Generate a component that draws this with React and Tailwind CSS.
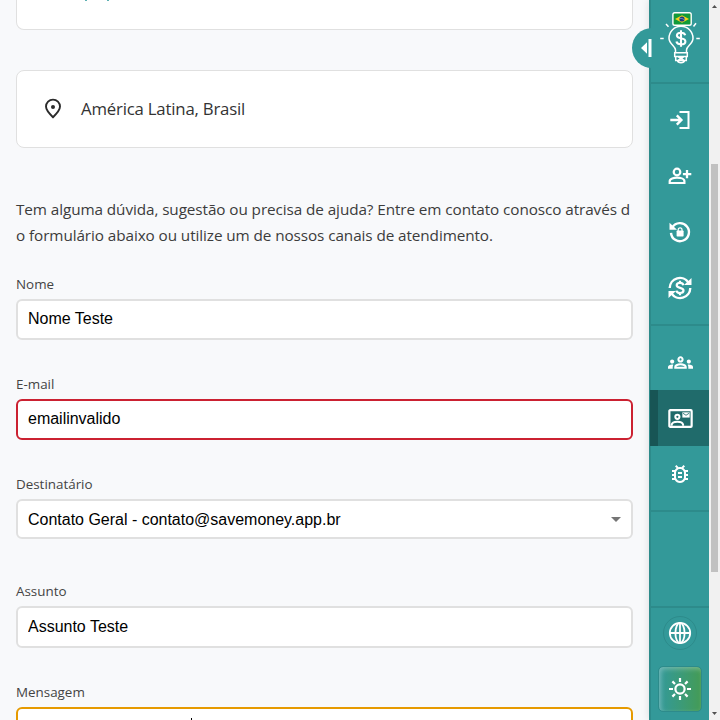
import React from "react";
import { MdOutlineBugReport, MdOutlineGroups } from "react-icons/md";

const inputBase =
  "w-full rounded-md border-2 bg-white px-[10px] font-['Liberation_Sans',Arial,sans-serif] text-base tracking-[-0.01px] text-black outline-none";

function Label({ children, className }) {
  return (
    <label className={`block h-5 text-[13.4px] leading-5 text-[#444] ${className}`}>{children}</label>
  );
}

function Divider() {
  return <div className="h-[2px] shrink-0 bg-[#2d8b8b]" />;
}

function NavItem({ children }) {
  return <div className="flex h-14 shrink-0 items-center justify-center">{children}</div>;
}

function Icon({ children, size = 24, strokeWidth = 2.2 }) {
  return (
    <svg width={size} height={size} viewBox="0 0 24 24" fill="none" stroke="white" strokeWidth={strokeWidth}>
      {children}
    </svg>
  );
}

function PinIcon() {
  return (
    <svg width="18" height="22" viewBox="0 0 18 22" fill="none">
      <path d="M9 19.2C5.4 15.8 2 12.2 2 8.6A7 7 0 0 1 16 8.6C16 12.2 12.6 15.8 9 19.2Z" stroke="#2b2b2b" strokeWidth="1.9" />
      <circle cx="9" cy="9" r="2" fill="#2b2b2b" />
    </svg>
  );
}

function LoginIcon() {
  return (
    <Icon>
      <path d="M11.5 4H20.5V20H11.5" strokeWidth="2" />
      <path d="M2.3 12H14M8.8 7.4L13.4 12L8.8 16.6" strokeWidth="2.4" />
    </Icon>
  );
}

function PersonAddIcon() {
  return (
    <Icon>
      <circle cx="9" cy="8" r="3.3" />
      <path d="M1.7 19V17.2C1.7 14.7 6 13.7 9 13.7S16.4 14.7 16.4 17.2V19Z" />
      <path d="M19 6V14.2M14.9 10.1H23.3" strokeWidth="2.3" />
    </Icon>
  );
}

function LockResetIcon() {
  return (
    <Icon>
      <path d="M4.4 7.3A9 9 0 1 1 3 12.8" strokeWidth="2.4" />
      <path d="M1.5 2.8V9.8H9Z" fill="white" stroke="none" />
      <rect x="8.6" y="10.6" width="7" height="5.8" rx=".7" fill="white" stroke="none" />
      <path d="M10.2 11V9.7A1.9 1.9 0 0 1 14 9.7V11" strokeWidth="1.2" />
    </Icon>
  );
}

function CurrencyIcon() {
  return (
    <Icon>
      <path d="M1.7 12A10.2 10.2 0 0 1 20.5 6.7M22.3 12A10.2 10.2 0 0 1 3.5 17.3" strokeWidth="2.4" />
      <path d="M23.5 2V9H16ZM.5 22V15H8Z" fill="white" stroke="none" />
      <path d="M15.3 9.2C15 7.6 13.8 6.9 12 6.9C10 6.9 8.7 7.8 8.7 9.3C8.7 12.6 15.5 11.1 15.5 14.5C15.5 16.1 14.1 17 12 17C10 17 8.7 16.2 8.5 14.6M12 4.8V7M12 17V19.2" strokeWidth="2.2" />
    </Icon>
  );
}

function ContactCardIcon() {
  return (
    <Icon size={25}>
      <rect x="1.3" y="4" width="21.4" height="16" rx=".8" strokeWidth="2.1" />
      <circle cx="9" cy="10.4" r="2" strokeWidth="1.9" />
      <path d="M3.5 19V18C3.8 15.8 6.7 15.1 9 15.1S14.2 15.8 14.5 18V19" strokeWidth="1.9" />
      <rect x="13.8" y="6.1" width="7" height="5" fill="white" stroke="none" />
      <path d="M14.4 7L17.3 8.9L20.2 7" stroke="#206b6b" strokeWidth=".8" />
    </Icon>
  );
}

function GlobeIcon() {
  return (
    <Icon strokeWidth={1.8}>
      <circle cx="12" cy="12" r="10.2" />
      <ellipse cx="12" cy="12" rx="4.6" ry="10.2" />
      <path d="M12 1.8V22.2M1.8 12H22.2" />
    </Icon>
  );
}

function SunIcon() {
  return (
    <Icon strokeWidth={2.2}>
      <circle cx="12" cy="12" r="4.6" />
      <path d="M12 1V5M12 19V23M1 12H5M19 12H23M4.4 4.4L7 7M17 17L19.6 19.6M4.4 19.6L7 17M17 7L19.6 4.4" />
    </Icon>
  );
}

function Logo() {
  return (
    <svg className="shrink-0" width="42" height="56" viewBox="0 0 42 56" fill="none" stroke="white" strokeWidth="1.5">
      <path d="M15.5 42V39C15.5 35 9 33 9 27.2A12 12 0 0 1 33 27.2C33 33 26.5 35 26.5 39V42" />
      <path d="M14.7 41.8H27.3V45.4H14.7ZM15.7 45.4V49.4H26.3V45.4M17.5 49.7C18 52.5 24 52.5 24.5 49.7M18 45.6L21 47.5L24 45.6M18 49.4L21 47.5L24 49.4" strokeWidth="1.5" />
      <path d="M0.2 27.5H3.7M36.3 27.5H39.8M6 13L8.5 15.7M36 12.3L33.5 15.5" />
      <rect x="12.9" y="1.8" width="18.3" height="12.4" rx="1.8" fill="#119a3a" strokeWidth="1.4" />
      <path d="M15 8L22 4.2L29 8L22 11.8Z" fill="#f6d21b" stroke="none" />
      <circle cx="22" cy="8" r="2.6" fill="#173b80" stroke="none" />
      <path d="M19.5 7.4Q22.2 7 24.4 8.7" stroke="#9ab4cd" strokeWidth=".6" />
      <path d="M25.2 24.3C24.8 22.4 23.2 21.7 21 21.7C18.4 21.7 16.9 22.8 16.9 24.5C16.9 28.6 25.4 26 25.4 30.4C25.4 32.2 23.7 33.3 21 33.3C18.5 33.3 16.8 32.4 16.4 30.6M21 19.3V35.7" strokeWidth="2.1" />
    </svg>
  );
}

export default function App() {
  return (
    <div className="relative flex h-[720px] w-[720px] overflow-hidden bg-[#f8f9fb] font-['Open_Sans','Noto_Sans',sans-serif]">
      <main className="flex w-[649px] shrink-0 flex-col pl-4 pr-4">
        <section className="h-[30px] shrink-0 rounded-b-lg border border-t-0 border-[#e0e0e0] bg-white pl-[68px]">
          <div className="flex gap-5">
            <span className="h-px w-[2px] bg-[#5fb0b2]" />
            <span className="h-px w-[2px] bg-[#5fb0b2]" />
          </div>
        </section>

        <section className="mt-10 flex h-[78px] shrink-0 items-center rounded-lg border border-[#e0e0e0] bg-white pl-[27px]">
          <PinIcon />
          <span className="ml-[19px] whitespace-nowrap text-[16.8px] tracking-[-0.2px] text-[#333]">América Latina, Brasil</span>
        </section>

        <p className="mt-[48px] h-[52px] shrink-0 whitespace-nowrap text-[15.3px] leading-[26px] tracking-[-0.09px] text-[#3c3c3c]">
          Tem alguma dúvida, sugestão ou precisa de ajuda? Entre em contato conosco através d
          <br />
          o formulário abaixo ou utilize um de nossos canais de atendimento.
        </p>

        <Label className="mt-[26px]">Nome</Label>
        <input className={`${inputBase} mt-[5px] h-[41px] shrink-0 border-[#e0e0e0] pb-[2px]`} defaultValue="Nome Teste" />

        <Label className="mt-[34px]">E-mail</Label>
        <input className={`${inputBase} mt-[5px] h-[41px] shrink-0 border-[#cb2131] pb-[2px]`} defaultValue="emailinvalido" />

        <Label className="mt-[34px]">Destinatário</Label>
        <div className={`${inputBase} mt-[5px] flex h-10 shrink-0 items-center justify-between border-[#e0e0e0]`}>
          <span className="pt-[2px]">Contato Geral - contato@savemoney.app.br</span>
          <svg width="10" height="5" viewBox="0 0 10 5">
            <path d="M0 0H10L5 5Z" fill="#757575" />
          </svg>
        </div>

        <Label className="mt-[42px]">Assunto</Label>
        <input className={`${inputBase} mt-[5px] h-[42px] shrink-0 border-[#e0e0e0]`} defaultValue="Assunto Teste" />

        <Label className="mt-[34px]">Mensagem</Label>
        <div className="mt-[5px] h-12 shrink-0 rounded-md border-2 border-[#e69a00] bg-white pl-[173px] pt-[9px]">
          <div className="h-3 w-px bg-black" />
        </div>
      </main>

      <aside className="flex w-[60px] shrink-0 flex-col border-l-2 border-[#2d8b8b] bg-[#339999] text-white shadow-[0_0_8px_rgba(0,0,0,0.12)]">
        <div className="flex h-[82px] shrink-0 justify-center pl-[2px] pt-[11px]">
          <Logo />
        </div>
        <Divider />
        <div className="flex h-[240px] shrink-0 flex-col pt-2">
          <NavItem><LoginIcon /></NavItem>
          <NavItem><PersonAddIcon /></NavItem>
          <NavItem><LockResetIcon /></NavItem>
          <NavItem><CurrencyIcon /></NavItem>
        </div>
        <Divider />
        <div className="flex h-[184px] shrink-0 flex-col pt-2">
          <NavItem><MdOutlineGroups size={25} /></NavItem>
          <div className="-ml-px flex h-14 shrink-0 items-center justify-center border-l-8 border-[#185555] bg-[#206b6b] pr-[7px]">
            <ContactCardIcon />
          </div>
          <NavItem><MdOutlineBugReport size={24} /></NavItem>
        </div>
        <Divider />
        <div className="h-[94px] shrink-0" />
        <Divider />
        <div className="mx-auto mt-2 flex size-[34px] shrink-0 items-center justify-center rounded-full border border-[#2d8b8b]">
          <GlobeIcon />
        </div>
        <div className="ml-[7px] mt-4 flex h-[46px] w-[44px] shrink-0 items-center justify-center rounded-[5px] border border-[#2d8b8b] bg-gradient-to-r from-[#339999] to-[#449b55] shadow-[inset_2px_2px_5px_rgba(255,255,255,0.3)]">
          <SunIcon />
        </div>
      </aside>

      <div className="absolute left-[632px] top-7 h-10 w-5 rounded-l-full bg-[#339999]">
        <svg className="ml-[9px] mt-[11px]" width="11" height="18" viewBox="0 0 11 18" fill="white">
          <path d="M0 9L6 3.3V14.7ZM7.5 0H10.5V18H7.5Z" />
        </svg>
      </div>

      <div className="flex w-[11px] shrink-0 flex-col items-center bg-[#f1f1f1]">
        <svg className="mt-[5px] shrink-0" width="5" height="3" viewBox="0 0 5 3"><path d="M0 3L2.5 0L5 3Z" fill="#505050" /></svg>
        <div className="mt-[156px] h-[408px] w-[7px] shrink-0 bg-[#c1c1c1]" />
        <svg className="mt-[140px] shrink-0" width="5" height="3" viewBox="0 0 5 3"><path d="M0 0L2.5 3L5 0Z" fill="#505050" /></svg>
      </div>
    </div>
  );
}
